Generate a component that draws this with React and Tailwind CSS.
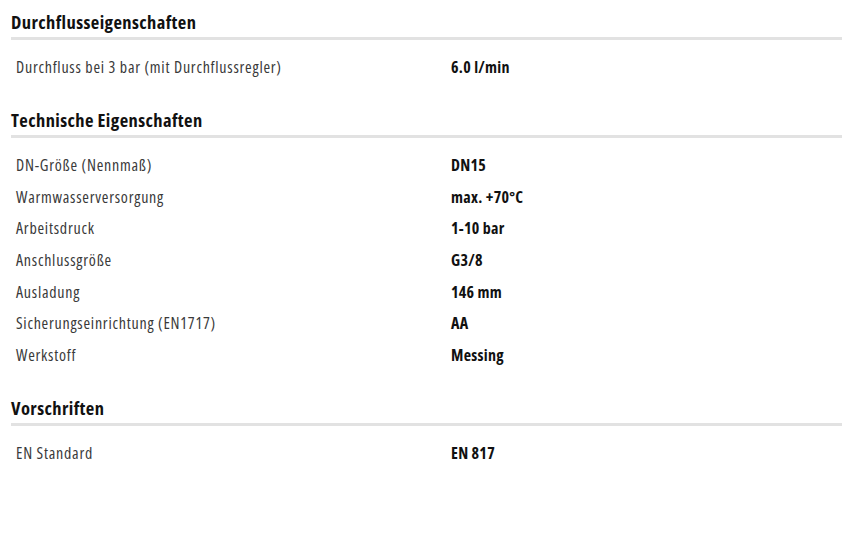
const sections = [
  {
    title: "Durchflusseigenschaften",
    rows: [["Durchfluss bei 3 bar (mit Durchflussregler)", "6.0 l/min"]],
  },
  {
    title: "Technische Eigenschaften",
    rows: [
      ["DN-Größe (Nennmaß)", "DN15"],
      ["Warmwasserversorgung", "max. +70°C"],
      ["Arbeitsdruck", "1-10 bar"],
      ["Anschlussgröße", "G3/8"],
      ["Ausladung", "146 mm"],
      ["Sicherungseinrichtung (EN1717)", "AA"],
      ["Werkstoff", "Messing"],
    ],
  },
  {
    title: "Vorschriften",
    rows: [["EN Standard", "EN 817"]],
  },
];

export default function App() {
  return (
    <div className="min-h-[540px] w-[860px] bg-white pl-[11px] pr-[18px] pt-[10px] [font-family:'Open_Sans',sans-serif]">
      {sections.map((s, i) => (
        <section key={s.title} className={i > 0 ? "mt-[25.5px]" : ""}>
          <h2 className="border-b-[3px] border-[#e2e2e2] pb-[3px] text-[18.5px] font-bold leading-[24px] tracking-[0.4px] text-[#111] [font-stretch:75%]">
            {s.title}
          </h2>
          <div className="mt-[11px]">
            {s.rows.map(([label, value]) => (
              <div key={label} className="grid h-[31.67px] grid-cols-[435px_1fr] items-center pl-[5px]">
                <span className="text-[16px] tracking-[0.75px] text-[#3a3a3a] [font-stretch:87.5%]">{label}</span>
                <span className="text-[16px] font-bold tracking-[0.3px] text-[#111] [font-stretch:75%]">{value}</span>
              </div>
            ))}
          </div>
        </section>
      ))}
    </div>
  );
}
